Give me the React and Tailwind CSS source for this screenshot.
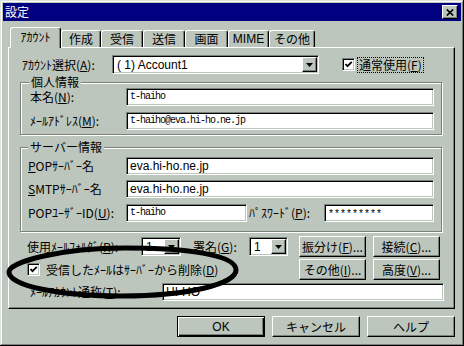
import React from "react";

function U({ children }) {
  return <span className="underline decoration-1 underline-offset-[1px]">{children}</span>;
}

const sunken =
  "bg-white border border-t-[#7b817b] border-l-[#7b817b] border-b-white border-r-white shadow-[inset_1px_1px_0_#000,inset_-1px_-1px_0_#bdc6bd]";
const raised =
  "bg-[#bdc6bd] border border-t-white border-l-white border-r-black border-b-black shadow-[inset_-1px_-1px_0_#7b817b]";

function Field({ w, children, tc = "" }) {
  return (
    <div className={`h-[18px] flex items-center pl-[3px] ${sunken} ${w}`}>
      <span className={tc}>{children}</span>
    </div>
  );
}

function DropBtn() {
  return (
    <div className={`w-[15px] h-[15px] flex items-center justify-center ${raised}`}>
      <svg width="7" height="4" viewBox="0 0 7 4">
        <path d="M0 0H7L3.5 4Z" fill="#000" />
      </svg>
    </div>
  );
}

function Combo({ w, children, tc = "" }) {
  return (
    <div className={`h-[19px] flex items-center p-[1px] pl-[2px] ${sunken} ${w}`}>
      <span className={`flex-1 pl-[2px] ${tc}`}>{children}</span>
      <DropBtn />
    </div>
  );
}

function Check() {
  return (
    <div className={`w-[13px] h-[13px] shrink-0 flex items-center justify-center ${sunken}`}>
      <svg width="9" height="9" viewBox="0 0 9 9">
        <path d="M1.5 4 L3.5 6.2 L7.8 1.8" stroke="#000" strokeWidth="1.8" fill="none" />
      </svg>
    </div>
  );
}

function Btn({ w, children, def }) {
  const cls = def
    ? "bg-[#bdc6bd] border border-black shadow-[inset_1px_1px_0_#fff,inset_-1px_-1px_0_#000,inset_-2px_-2px_0_#7b817b]"
    : raised;
  return (
    <div className={`h-[21px] flex items-center justify-center ${cls} ${w}`}>
      {children}
    </div>
  );
}

function Tab({ w, children, mime }) {
  return (
    <div
      className={`h-[17px] flex items-center justify-center bg-[#bdc6bd] border-t border-l border-r border-t-white border-l-white border-r-black rounded-t-[3px] shadow-[inset_-1px_0_0_#7b817b] ${w} ${mime ? "font-['Liberation_Sans',sans-serif] text-[12px]" : ""}`}
    >
      {children}
    </div>
  );
}

const mono = "font-['Liberation_Mono',monospace] text-[10px] tracking-[-1px]";
const sans = "font-['Liberation_Sans',sans-serif] text-[12px]";

export default function App() {
  return (
    <div className="relative w-[464px] h-[346px] overflow-hidden bg-[#bdc6bd] p-[3px] flex flex-col font-['Noto_Sans_CJK_JP',sans-serif] text-[12px] leading-none text-black shadow-[inset_-1px_-1px_0_#000,inset_1px_1px_0_#dfe3df,inset_-2px_-2px_0_#7b817b,inset_2px_2px_0_#fff]">
      {/* title bar */}
      <div className="h-[18px] shrink-0 bg-[#000080] flex items-center justify-between pl-[2px] pr-[3px]">
        <span className="text-white text-[12px]">設定</span>
        <div className={`w-[16px] h-[14px] flex items-center justify-center ${raised}`}>
          <svg width="8" height="7" viewBox="0 0 8 7">
            <path d="M0.8 0.5 L7.2 6.5 M7.2 0.5 L0.8 6.5" stroke="#000" strokeWidth="1.7" />
          </svg>
        </div>
      </div>

      {/* tabs + panel */}
      <div className="flex flex-col pl-[5px] pr-[6px] pt-[6px]">
        <div className="flex items-end h-[20px] pl-[2px]">
          <div className="relative z-10 -mb-px h-[21px] w-[51px] pb-[3px] flex items-center justify-center bg-[#bdc6bd] border-t border-l border-r border-t-white border-l-white border-r-black rounded-t-[3px] shadow-[inset_-1px_0_0_#7b817b]">
            ｱｶｳﾝﾄ
          </div>
          <Tab w="w-[40px]">作成</Tab>
          <Tab w="w-[42px]">受信</Tab>
          <Tab w="w-[42px]">送信</Tab>
          <Tab w="w-[43px]">画面</Tab>
          <Tab w="w-[41px]" mime>MIME</Tab>
          <Tab w="w-[46px]">その他</Tab>
        </div>

        <div className="h-[262px] flex flex-col pt-[7px] border border-t-white border-l-white border-r-black border-b-black shadow-[inset_-1px_-1px_0_#7b817b]">
          {/* account select */}
          <div className="flex items-center h-[19px]">
            <span className="ml-[13px] w-[90px]">
              ｱｶｳﾝﾄ選択(<U>A</U>):
            </span>
            <Combo w="w-[207px]" tc={sans}>( 1) Account1</Combo>
            <div className="ml-[23px]">
              <Check />
            </div>
            <span className="ml-[2px] px-[1px] py-[1px] border border-dotted border-black">
              通常使用(<U>F</U>)
            </span>
          </div>

          {/* 個人情報 */}
          <div className="relative ml-[11px] mt-[8px] w-[422px] border border-[#7b817b] shadow-[1px_1px_0_#fff,inset_1px_1px_0_#fff] pt-[5px] pb-[4px] flex flex-col gap-[6px]">
            <span className="absolute left-[8px] -top-[7px] bg-[#bdc6bd] px-[2px] leading-[12px]">個人情報</span>
            <div className="flex items-center">
              <span className="pl-[9px] w-[105px]">
                本名(<U>N</U>):
              </span>
              <Field w="w-[308px]" tc={mono}>t-haiho</Field>
            </div>
            <div className="flex items-center">
              <span className="pl-[9px] w-[105px]">
                ﾒｰﾙｱﾄﾞﾚｽ(<U>M</U>):
              </span>
              <Field w="w-[308px]" tc={mono}>t-haiho@eva.hi-ho.ne.jp</Field>
            </div>
          </div>

          {/* サーバー情報 */}
          <div className="relative ml-[11px] mt-[12px] w-[422px] border border-[#7b817b] shadow-[1px_1px_0_#fff,inset_1px_1px_0_#fff] pt-[9px] pb-[9px] flex flex-col">
            <span className="absolute left-[7px] -top-[7px] bg-[#bdc6bd] px-[2px] leading-[12px]">サーバー情報</span>
            <div className="flex items-center">
              <span className="pl-[7px] w-[105px]">
                <U>P</U>OPｻｰﾊﾞｰ名
              </span>
              <Field w="w-[308px]" tc={sans}>eva.hi-ho.ne.jp</Field>
            </div>
            <div className="flex items-center mt-[5px]">
              <span className="pl-[7px] w-[105px]">
                <U>S</U>MTPｻｰﾊﾞｰ名
              </span>
              <Field w="w-[308px]" tc={sans}>eva.hi-ho.ne.jp</Field>
            </div>
            <div className="flex items-center mt-[6px]">
              <span className="pl-[7px] w-[105px]">
                POPﾕｰｻﾞｰID(<U>U</U>):
              </span>
              <Field w="w-[121px]" tc={mono}>t-haiho</Field>
              <span className="pl-[2px] w-[77px]">
                ﾊﾟｽﾜｰﾄﾞ(<U>P</U>):
              </span>
              <Field w="w-[110px]" tc="font-['Liberation_Mono',monospace] text-[10px] translate-y-[2px]">*********</Field>
            </div>
          </div>

          {/* lower options */}
          <div className="flex mt-[4px]">
            <div className="ml-[18px] w-[272px] flex flex-col">
              <div className="flex items-center h-[21px]">
                <span className="w-[114px]">
                  使用ﾒｰﾙﾌｫﾙﾀﾞ(<U>R</U>):
                </span>
                <Combo w="w-[40px]" tc={sans}>1</Combo>
                <span className="ml-[12px] w-[56px]">
                  署名(<U>G</U>):
                </span>
                <Combo w="w-[39px]" tc={sans}>1</Combo>
              </div>
              <div className="flex items-center h-[21px] mt-[2px]">
                <Check />
                <span className="ml-[6px]">
                  受信したﾒｰﾙはｻｰﾊﾞｰから削除(<U>D</U>)
                </span>
              </div>
            </div>
            <div className="grid grid-cols-[67px_67px] gap-x-[7px] gap-y-[2px]">
              <Btn w="w-[67px]">
                振分け(<U>F</U>)...
              </Btn>
              <Btn w="w-[67px]">
                接続(<U>C</U>)...
              </Btn>
              <Btn w="w-[67px]">
                その他(<U>I</U>)...
              </Btn>
              <Btn w="w-[67px]">
                高度(<U>V</U>)...
              </Btn>
            </div>
          </div>

          <div className="flex items-center mt-[3px]">
            <span className="ml-[21px] w-[132px]">
              ﾒｰﾙｱｶｳﾝﾄ通称(<U>T</U>):
            </span>
            <Field w="w-[282px]" tc={sans}>HI-HO</Field>
          </div>
        </div>
      </div>

      {/* dialog buttons */}
      <div className="flex justify-end gap-[7px] pr-[6px] mt-[7px]">
        <Btn w="w-[88px]" def>
          <span className={sans}>OK</span>
        </Btn>
        <Btn w="w-[88px]">キャンセル</Btn>
        <Btn w="w-[88px]">ヘルプ</Btn>
      </div>

      {/* hand-drawn ellipse annotation */}
      <svg className="absolute left-0 top-0 pointer-events-none" width="464" height="346" viewBox="0 0 464 346">
        <path
          d="M 9 272 C 9 262, 60 248, 125 248 C 188 248, 236 255, 236 270 C 236 284, 188 296, 122 296 C 60 296, 9 286, 9 272 Z"
          fill="none"
          stroke="#000"
          strokeWidth="5"
        />
      </svg>
    </div>
  );
}
